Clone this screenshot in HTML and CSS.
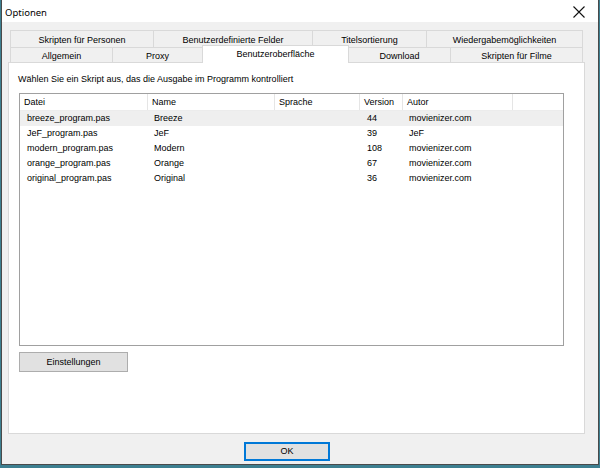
FILE: index.html
```html
<!DOCTYPE html>
<html>
<head>
<meta charset="utf-8">
<link rel="stylesheet" href="styles.css">
</head>
<body>
<div class="window">
  <div class="titlebar">
    <span class="title">Optionen</span>
    <svg class="close" width="12" height="12" viewBox="0 0 12 12"><path d="M0.5 0.5 L11.5 11.5 M11.5 0.5 L0.5 11.5" stroke="#111" stroke-width="1.1" fill="none"/></svg>
  </div>
  <div class="client">
    <div class="tabs">
      <div class="tabrow row1">
        <div class="tab w143">Skripten für Personen</div>
        <div class="tab w159">Benutzerdefinierte Felder</div>
        <div class="tab w114">Titelsortierung</div>
        <div class="tab w157">Wiedergabemöglichkeiten</div>
      </div>
      <div class="tabrow row2">
        <div class="tab w102">Allgemein</div>
        <div class="tab w90">Proxy</div>
        <div class="tab w146 active">Benutzeroberfläche</div>
        <div class="tab w102">Download</div>
        <div class="tab w133">Skripten für Filme</div>
      </div>
    </div>
    <div class="panel">
      <div class="label">Wählen Sie ein Skript aus, das die Ausgabe im Programm kontrolliert</div>
      <div class="list">
        <div class="hdr">
          <div class="c c1">Datei</div>
          <div class="c c2">Name</div>
          <div class="c c3">Sprache</div>
          <div class="c c4">Version</div>
          <div class="c c5">Autor</div>
        </div>
        <div class="row sel"><div class="c c1">breeze_program.pas</div><div class="c c2">Breeze</div><div class="c c3"></div><div class="c c4">44</div><div class="c c5">movienizer.com</div></div>
        <div class="row"><div class="c c1">JeF_program.pas</div><div class="c c2">JeF</div><div class="c c3"></div><div class="c c4">39</div><div class="c c5">JeF</div></div>
        <div class="row"><div class="c c1">modern_program.pas</div><div class="c c2">Modern</div><div class="c c3"></div><div class="c c4">108</div><div class="c c5">movienizer.com</div></div>
        <div class="row"><div class="c c1">orange_program.pas</div><div class="c c2">Orange</div><div class="c c3"></div><div class="c c4">67</div><div class="c c5">movienizer.com</div></div>
        <div class="row"><div class="c c1">original_program.pas</div><div class="c c2">Original</div><div class="c c3"></div><div class="c c4">36</div><div class="c c5">movienizer.com</div></div>
      </div>
      <div class="btn settings">Einstellungen</div>
    </div>
    <div class="btn ok">OK</div>
  </div>
</div>
</body>
</html>
```
FILE: styles.css
```css
html, body {
  margin: 0;
  padding: 0;
}
body {
  width: 600px;
  height: 468px;
  background: #3d7f90;
  font-family: "Liberation Sans", Arial, sans-serif;
  font-size: 9px;
  color: #000;
  overflow: hidden;
}
.window {
  margin-left: 1px;
  width: 596px;
  height: 464px;
  border-left: 1px solid #4a4a4a;
  border-right: 1px solid #4a4a4a;
  border-bottom: 1px solid #4a4a4a;
  display: flex;
  flex-direction: column;
  background: #f0f0f0;
}
.titlebar {
  height: 22px;
  background: #ffffff;
  display: flex;
  align-items: center;
  justify-content: space-between;
  padding: 0 13px 0 3px;
  flex: none;
}
.title {
  font-family: "Noto Sans", "Liberation Sans", sans-serif;
  font-size: 9.5px;
  padding-top: 2px;
}
.close {
  margin-top: 2px;
}
.client {
  flex: 1;
  background: #f0f0f0;
  padding: 8px 0 0 6px;
}
.tabs {
  margin-left: 2px;
  width: 573px;
}
.tabrow {
  display: flex;
}
.tab {
  box-sizing: border-box;
  border: 1px solid #d9d9d9;
  border-bottom: none;
  margin-right: -1px;
  background: #f0f0f0;
  text-align: center;
  flex: none;
}
.tab:last-child {
  margin-right: 0;
}
.row1 .tab {
  height: 17px;
  line-height: 17px;
  padding-top: 1px;
}
.row2 .tab {
  height: 15px;
  line-height: 15px;
  padding-top: 1px;
}
.w143 { width: 144px; }
.w159 { width: 160px; }
.w114 { width: 115px; }
.w157 { width: 157px; }
.w102 { width: 103px; }
.w90 { width: 91px; }
.w146 { width: 147px; }
.w133 { width: 133px; }
.row2 .tab.active {
  position: relative;
  top: -2px;
  height: 18px;
  line-height: 16px;
  padding-top: 0;
  background: #ffffff;
  z-index: 2;
  margin-bottom: -3px;
}
.panel {
  box-sizing: border-box;
  width: 577px;
  height: 372px;
  background: #ffffff;
  border: 1px solid #d9d9d9;
  padding: 8px 0 0 10px;
  position: relative;
  z-index: 1;
}
.label {
  height: 15px;
  line-height: 16px;
  margin-left: -1px;
}
.list {
  box-sizing: border-box;
  margin-top: 7px;
  width: 545px;
  height: 253px;
  border: 1px solid #a0a0a0;
  background: #fff;
}
.hdr {
  display: flex;
  height: 16px;
  line-height: 17px;
  border-bottom: 1px solid #ececec;
}
.hdr .c {
  border-right: 1px solid #e5e5e5;
  padding-left: 4px;
}
.c {
  box-sizing: border-box;
  flex: none;
  overflow: hidden;
  white-space: nowrap;
}
.c1 { width: 128px; }
.c2 { width: 127px; }
.c3 { width: 85px; }
.c4 { width: 43px; }
.c5 { width: 110px; }
.row {
  display: flex;
  height: 15px;
  line-height: 15px;
}
.row .c {
  padding-left: 7px;
}
.row .c2 { padding-left: 6px; }
.row .c4 { padding-left: 7px; }
.row .c5 { padding-left: 6px; }
.row.sel {
  background: #efefef;
}
.btn {
  box-sizing: border-box;
  background: #e1e1e1;
  border: 1px solid #adadad;
  text-align: center;
}
.settings {
  margin-top: 6px;
  width: 109px;
  height: 20px;
  line-height: 18px;
}
.ok {
  margin-top: 8px;
  margin-left: 236px;
  width: 86px;
  height: 19px;
  line-height: 15px;
  border: 2px solid #0078d7;
}
```
